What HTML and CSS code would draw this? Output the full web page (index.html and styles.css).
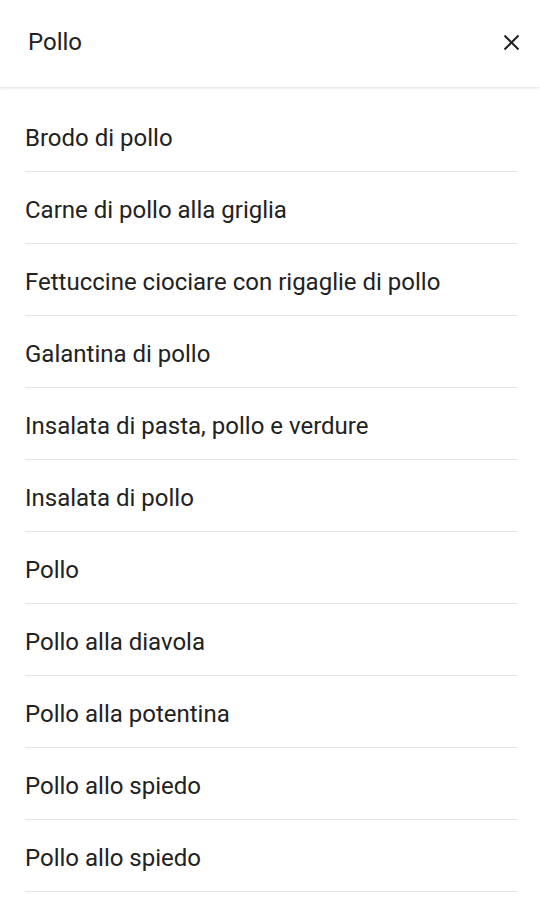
FILE: index.html
```html
<!DOCTYPE html>
<html lang="it">
<head>
    <meta charset="UTF-8">
    <meta name="viewport" content="width=device-width, initial-scale=1.0">
    <title>Pollo</title>
    <link rel="stylesheet" href="styles.css">
</head>
<body>
    <div class="search-header">
        <div class="query">Pollo</div>
        <button class="close" aria-label="Chiudi">
            <svg width="17" height="17" viewBox="0 0 17 17">
                <path d="M1.5 1.5 L15.5 15.5 M15.5 1.5 L1.5 15.5" stroke="#222" stroke-width="2" fill="none"/>
            </svg>
        </button>
    </div>
    <ul class="results">
        <li>Brodo di pollo</li>
        <li>Carne di pollo alla griglia</li>
        <li>Fettuccine ciociare con rigaglie di pollo</li>
        <li>Galantina di pollo</li>
        <li>Insalata di pasta, pollo e verdure</li>
        <li>Insalata di pollo</li>
        <li>Pollo</li>
        <li>Pollo alla diavola</li>
        <li>Pollo alla potentina</li>
        <li>Pollo allo spiedo</li>
        <li>Pollo allo spiedo</li>
    </ul>
</body>
</html>
```

FILE: styles.css
```css
body {
    font-family: Roboto, "Liberation Sans", sans-serif;
    background-color: #fff;
    color: #222;
    margin: 0;
    padding: 0;
}
.search-header {
    height: 87px;
    display: flex;
    align-items: center;
    justify-content: space-between;
    padding: 0 20px 0 28px;
    box-shadow: 0 1px 3px rgba(0, 0, 0, 0.12);
    position: relative;
}
.query {
    font-size: 24px;
    margin-top: -3px;
}
.close {
    background: none;
    border: 0;
    padding: 0;
    width: 17px;
    height: 17px;
    margin-top: -2px;
}
.close svg {
    display: block;
}
.results {
    list-style: none;
    margin: 0;
    padding: 13px 23px 0 25px;
}
.results li {
    height: 72px;
    box-sizing: border-box;
    display: flex;
    align-items: center;
    font-size: 24px;
    border-bottom: 1px solid #e6e6e6;
    padding-top: 4px;
}
```
